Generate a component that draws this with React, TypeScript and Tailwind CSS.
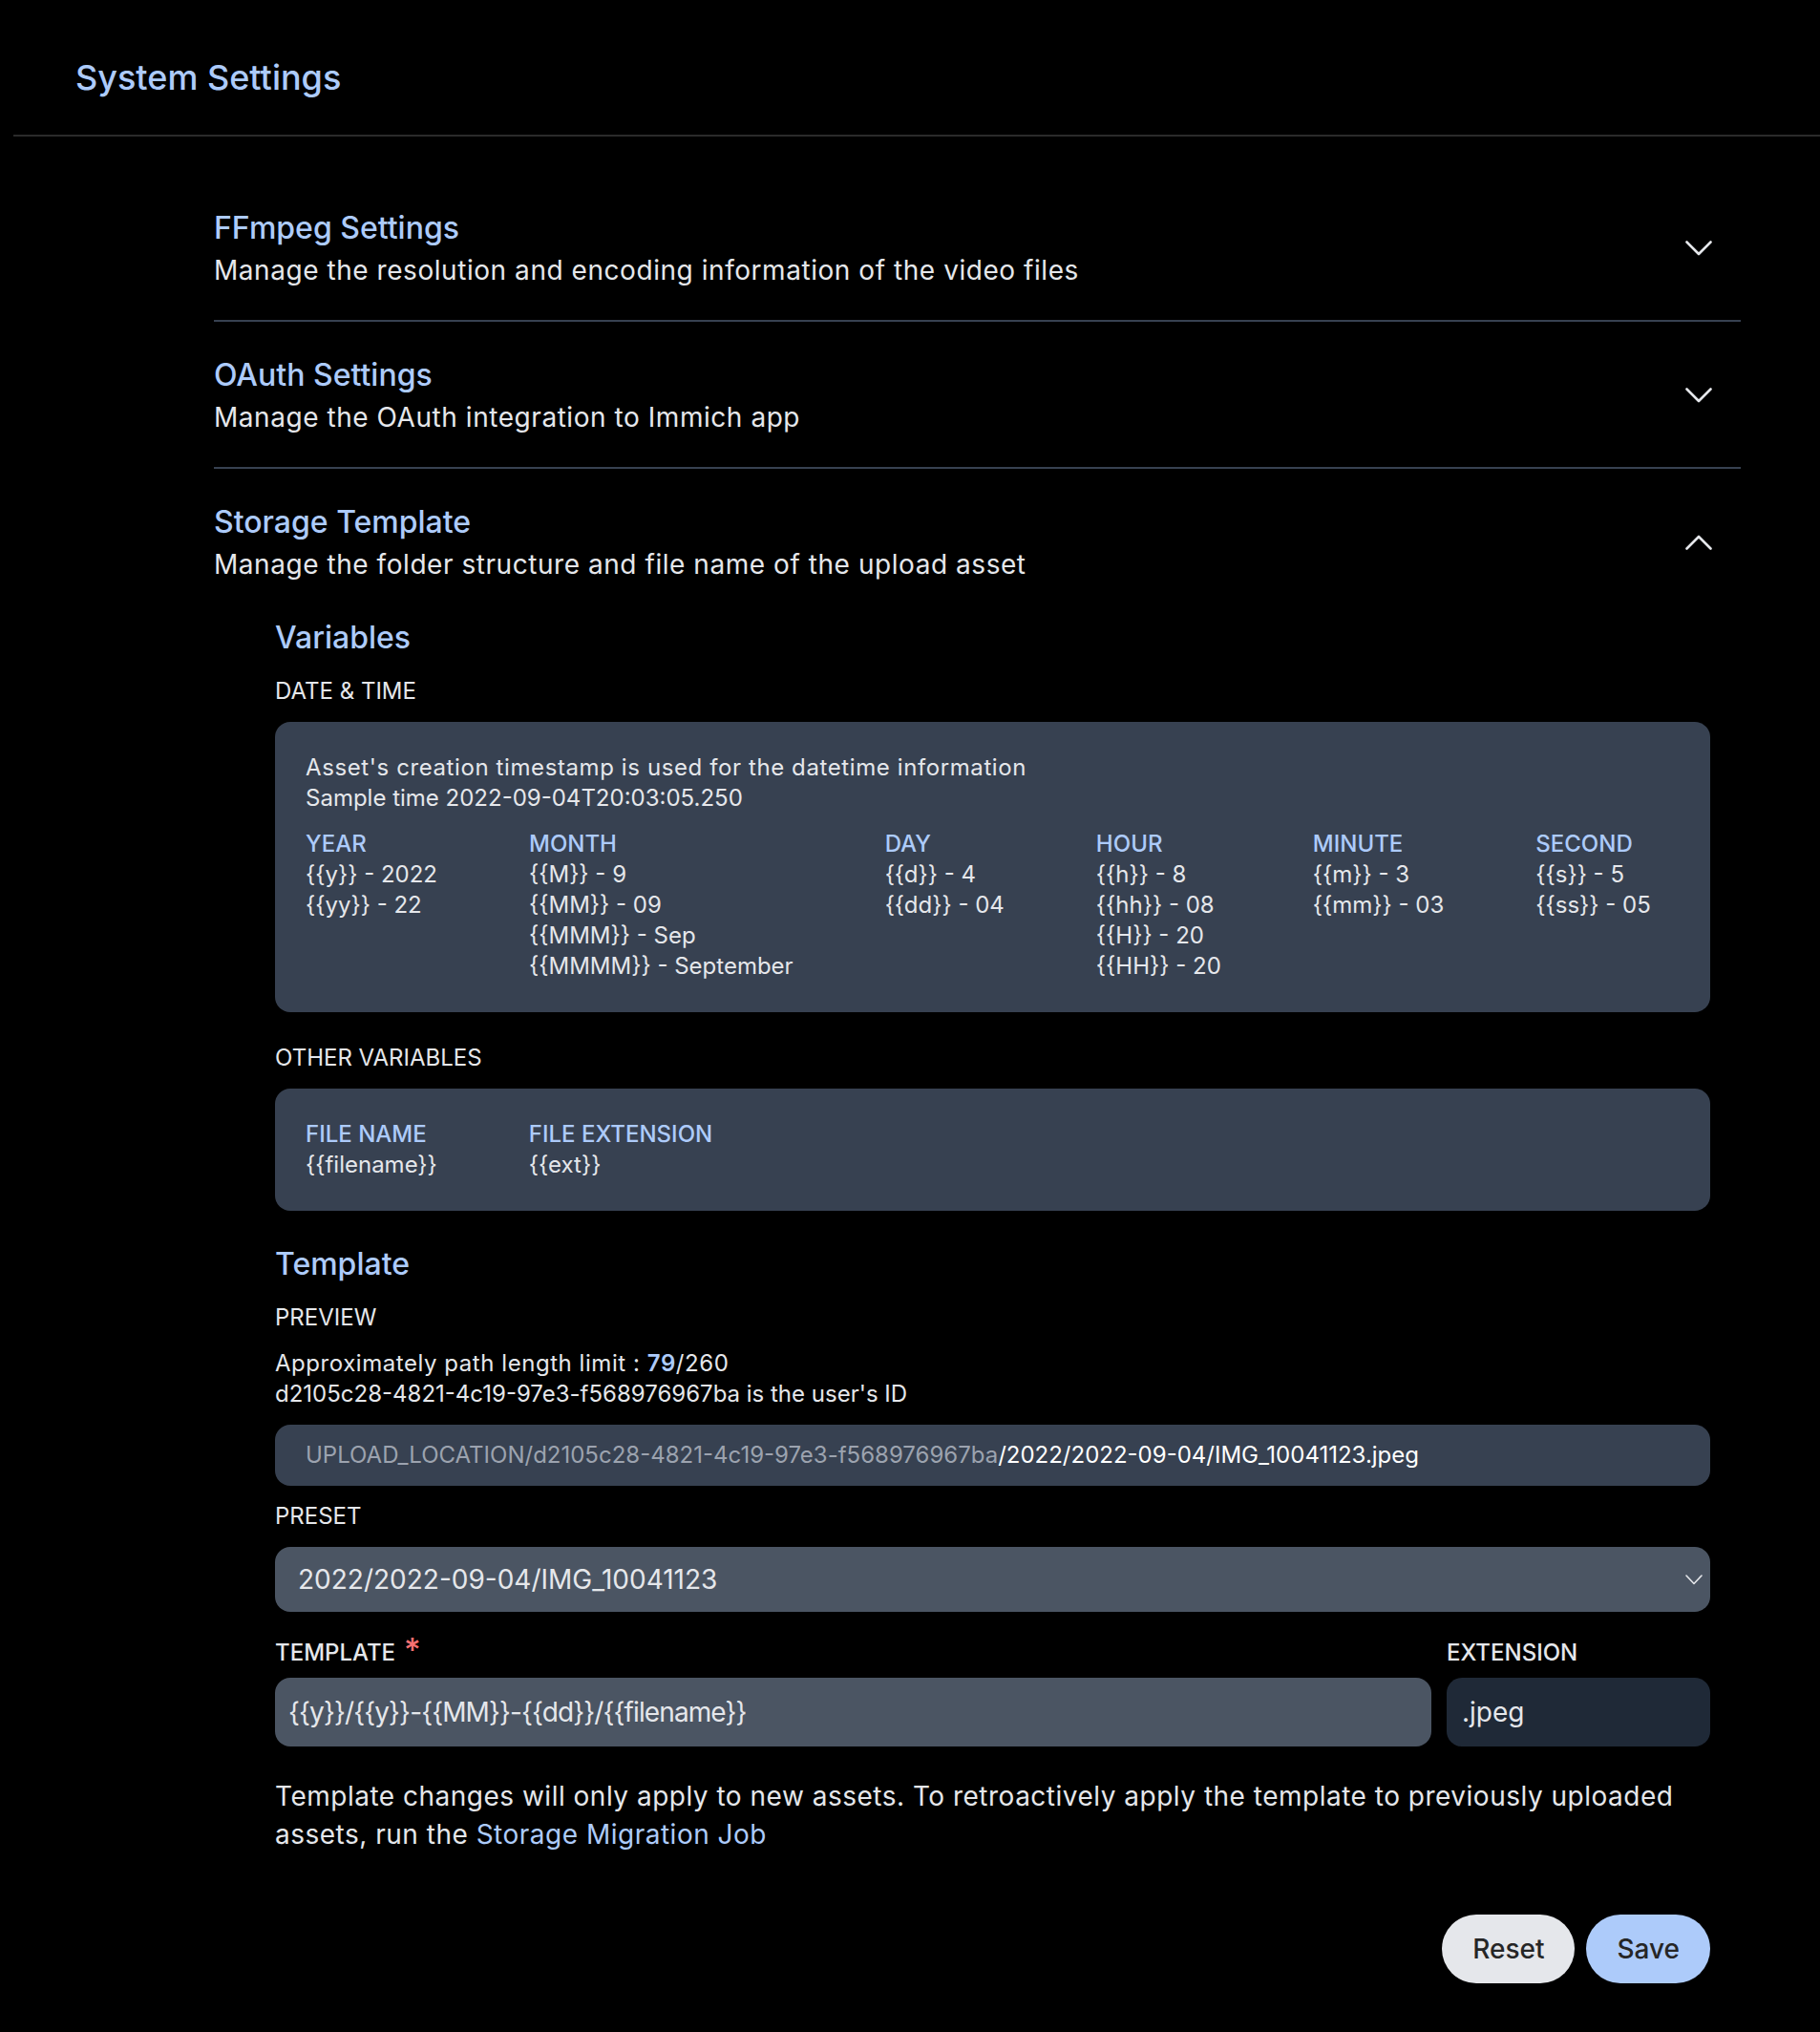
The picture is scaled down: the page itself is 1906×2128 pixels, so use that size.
import React from "react";

const FONT = { fontFamily: '"Inter", "Noto Sans", sans-serif' };

function Chevron({ up }: { up?: boolean }) {
  return (
    <svg width="28" height="16" viewBox="0 0 28 16" fill="none">
      {up ? (
        <polyline points="1.5,14.5 14,2 26.5,14.5" stroke="#e5e7eb" strokeWidth="2.6" strokeLinecap="round" strokeLinejoin="round" />
      ) : (
        <polyline points="1.5,1.5 14,14 26.5,1.5" stroke="#e5e7eb" strokeWidth="2.6" strokeLinecap="round" strokeLinejoin="round" />
      )}
    </svg>
  );
}

function AccordionHeader({ title, subtitle, up }: { title: string; subtitle: string; up?: boolean }) {
  return (
    <div className="flex items-center justify-between py-[32px]">
      <div>
        <h2 className="text-[32px] leading-[48px] font-medium text-[#adcbfa]">{title}</h2>
        <p className="text-[28px] leading-[40px] tracking-[0.55px] text-[#e5e7eb]">{subtitle}</p>
      </div>
      <div className="flex h-[48px] w-[48px] items-center justify-center mr-[20px] mt-[2px]">
        <Chevron up={up} />
      </div>
    </div>
  );
}

const dateColumns: { title: string; items: string[] }[] = [
  { title: "YEAR", items: ["{{y}} - 2022", "{{yy}} - 22"] },
  { title: "MONTH", items: ["{{M}} - 9", "{{MM}} - 09", "{{MMM}} - Sep", "{{MMMM}} - September"] },
  { title: "DAY", items: ["{{d}} - 4", "{{dd}} - 04"] },
  { title: "HOUR", items: ["{{h}} - 8", "{{hh}} - 08", "{{H}} - 20", "{{HH}} - 20"] },
  { title: "MINUTE", items: ["{{m}} - 3", "{{mm}} - 03"] },
  { title: "SECOND", items: ["{{s}} - 5", "{{ss}} - 05"] },
];

const otherColumns: { title: string; items: string[] }[] = [
  { title: "FILE NAME", items: ["{{filename}}"] },
  { title: "FILE EXTENSION", items: ["{{ext}}"] },
];

function Columns({ cols }: { cols: { title: string; items: string[] }[] }) {
  return (
    <div className="flex gap-[96px]">
      {cols.map((c) => (
        <div key={c.title}>
          <p className="font-medium text-[#adcbfa]">{c.title}</p>
          <ul>
            {c.items.map((i) => (
              <li key={i}>{i}</li>
            ))}
          </ul>
        </div>
      ))}
    </div>
  );
}

export default function App() {
  return (
    <div className="min-h-[2128px] w-full bg-black text-[#e5e7eb]" style={FONT}>
      <div className="ml-[14px]">
        <header className="h-[143px] border-b-2 border-[#2b2b2b] pt-[53px] pl-[65px]">
          <h1 className="text-[36px] leading-[56px] font-medium text-[#adcbfa]">System Settings</h1>
        </header>

        <div className="ml-[210px] w-[1599px] pt-[40px]">
          <div className="border-b-2 border-[#374151]">
            <AccordionHeader title="FFmpeg Settings" subtitle="Manage the resolution and encoding information of the video files" />
          </div>
          <div className="border-b-2 border-[#374151]">
            <AccordionHeader title="OAuth Settings" subtitle="Manage the OAuth integration to Immich app" />
          </div>
          <div>
            <AccordionHeader title="Storage Template" subtitle="Manage the folder structure and file name of the upload asset" up />

            <div className="pl-[64px] pr-[32px] pb-[51px]">
              <h3 className="mt-[1px] text-[32px] leading-[48px] font-medium text-[#adcbfa]">Variables</h3>

              <p className="mt-[16px] text-[24px] leading-[32px]">DATE &amp; TIME</p>
              <div className="mt-[16px] rounded-[16px] bg-[#374151] p-[32px] text-[24px] leading-[32px]">
                <div className="mb-[16px]">
                  <p className="tracking-[0.6px]">Asset's creation timestamp is used for the datetime information</p>
                  <p>Sample time 2022-09-04T20:03:05.250</p>
                </div>
                <Columns cols={dateColumns} />
              </div>

              <p className="mt-[32px] text-[24px] leading-[32px]">OTHER VARIABLES</p>
              <div className="mt-[16px] rounded-[16px] bg-[#374151] p-[32px] text-[24px] leading-[32px]">
                <Columns cols={otherColumns} />
              </div>

              <h3 className="mt-[32px] text-[32px] leading-[48px] font-medium text-[#adcbfa]">Template</h3>

              <p className="mt-[16px] text-[24px] leading-[32px]">PREVIEW</p>
              <div className="mt-[16px] text-[24px] leading-[32px]">
                <p className="tracking-[0.55px]">
                  Approximately path length limit : <span className="font-semibold text-[#adcbfa]">79</span>/260
                </p>
                <p>d2105c28-4821-4c19-97e3-f568976967ba is the user's ID</p>
              </div>
              <div className="mt-[16px] rounded-[16px] bg-[#374151] px-[32px] py-[16px] text-[24px] leading-[32px]">
                <span className="text-[#9ca3af]">UPLOAD_LOCATION/d2105c28-4821-4c19-97e3-f568976967ba</span>
                <span className="text-white">/2022/2022-09-04/IMG_10041123.jpeg</span>
              </div>

              <p className="mt-[16px] text-[24px] leading-[32px]">PRESET</p>
              <div className="mt-[16px] flex h-[68px] items-center justify-between rounded-[16px] bg-[#4b5563] pl-[24px] pr-[8px]">
                <span className="text-[28px] leading-[40px] text-[#e5e7eb]">2022/2022-09-04/IMG_10041123</span>
                <svg width="18" height="11" viewBox="0 0 18 11" fill="none">
                  <polyline points="1,1 9,9.5 17,1" stroke="#e5e7eb" strokeWidth="1.6" strokeLinecap="round" strokeLinejoin="round" />
                </svg>
              </div>

              <div className="mt-[27px] flex gap-[16px]">
                <div className="flex-1">
                  <p className="flex items-start text-[24px] leading-[32px] font-medium text-[#e5e7eb]">
                    <span>TEMPLATE</span>
                    <span className="ml-[9px] -mt-[4px] text-[34px] leading-[34px] text-[#f87171]">*</span>
                  </p>
                  <input
                    readOnly
                    value="{{y}}/{{y}}-{{MM}}-{{dd}}/{{filename}}"
                    className="mt-[10px] h-[72px] w-full rounded-[16px] bg-[#4b5563] px-[14px] text-[28px] tracking-[-0.9px] text-[#e5e7eb] outline-none"
                    style={FONT}
                  />
                </div>
                <div className="w-[276px]">
                  <p className="text-[24px] leading-[32px] font-medium text-[#e5e7eb]">EXTENSION</p>
                  <input
                    readOnly
                    value=".jpeg"
                    className="mt-[10px] h-[72px] w-full rounded-[16px] bg-[#1f2937] px-[16px] text-[28px] text-[#e5e7eb] outline-none"
                    style={FONT}
                  />
                </div>
              </div>

              <p className="mt-[32px] text-[28px] leading-[40px] tracking-[0.5px]">
                Template changes will only apply to new assets. To retroactively apply the template to previously uploaded
                assets, run the <span className="text-[#adcbfa]">Storage Migration Job</span>
              </p>

              <div className="mt-[64px] flex justify-end gap-[12px]">
                <button className="h-[72px] rounded-full bg-[#e5e7eb] px-[32px] text-[28px] font-medium text-[#262626]">Reset</button>
                <button className="h-[72px] rounded-full bg-[#adcbfa] px-[32px] text-[28px] font-medium text-[#262626]">Save</button>
              </div>
            </div>
          </div>
        </div>
      </div>
    </div>
  );
}
